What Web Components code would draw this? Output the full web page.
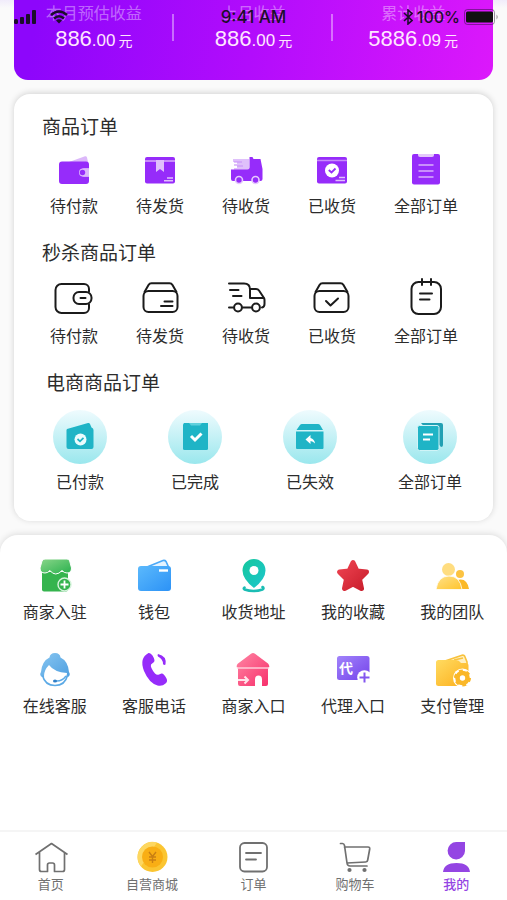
<!DOCTYPE html>
<html lang="zh-CN">
<head>
<meta charset="UTF-8">
<meta name="viewport" content="width=device-width, initial-scale=1.0">
<title>我的</title>
<style>
	html {
		height: 100%;
	}
	body {
		margin: 0;
		min-height: 100%;
		display: flex;
		flex-direction: column;
		position: relative;
		background: linear-gradient(#f1ecfb, #fafafa 8px);
		font-family: 'Liberation Sans', 'Noto Sans CJK SC', sans-serif;
		color: #2c2c2c;
	}
	tool-panel {
		flex: 1;
	}
</style>
</head>
<body>
	<status-bar></status-bar>
	<income-card>
		<income-item whole="886" cents=".00">本月预估收益</income-item>
		<income-item whole="886" cents=".00">上月收益</income-item>
		<income-item whole="5886" cents=".09">累计收益</income-item>
	</income-card>
	<order-panel>
		<order-group heading="商品订单">
			<icon-link icon="wallet">待付款</icon-link>
			<icon-link icon="parcel">待发货</icon-link>
			<icon-link icon="truck">待收货</icon-link>
			<icon-link icon="received">已收货</icon-link>
			<icon-link icon="list">全部订单</icon-link>
		</order-group>
		<order-group heading="秒杀商品订单">
			<icon-link icon="wallet-line" size="40">待付款</icon-link>
			<icon-link icon="parcel-line" size="40">待发货</icon-link>
			<icon-link icon="truck-line" size="40">待收货</icon-link>
			<icon-link icon="received-line" size="40">已收货</icon-link>
			<icon-link icon="note-line" size="40">全部订单</icon-link>
		</order-group>
		<order-group heading="电商商品订单" round>
			<icon-link icon="paid" size="54" round>已付款</icon-link>
			<icon-link icon="done" size="54" round>已完成</icon-link>
			<icon-link icon="expired" size="54" round>已失效</icon-link>
			<icon-link icon="files" size="54" round>全部订单</icon-link>
		</order-group>
	</order-panel>
	<tool-panel>
		<icon-link icon="shop">商家入驻</icon-link>
		<icon-link icon="purse">钱包</icon-link>
		<icon-link icon="pin">收货地址</icon-link>
		<icon-link icon="star">我的收藏</icon-link>
		<icon-link icon="team">我的团队</icon-link>
		<icon-link icon="service">在线客服</icon-link>
		<icon-link icon="phone">客服电话</icon-link>
		<icon-link icon="house">商家入口</icon-link>
		<icon-link icon="agent">代理入口</icon-link>
		<icon-link icon="payment">支付管理</icon-link>
	</tool-panel>
	<tab-bar>
		<tab-item icon="home">首页</tab-item>
		<tab-item icon="coin">自营商城</tab-item>
		<tab-item icon="order">订单</tab-item>
		<tab-item icon="cart">购物车</tab-item>
		<tab-item icon="me" active>我的</tab-item>
	</tab-bar>

<script>
// diagonal gradient for use inside an icon
const gradient = (id, from, to) => `
	<linearGradient id="${id}" x1="0" y1="0" x2="1" y2="1">
		<stop offset="0" stop-color="${from}"/><stop offset="1" stop-color="${to}"/>
	</linearGradient>`;

const ICONS = {
	// solid purple
	'wallet': `
		<path d="M13 10 29 4.200q1.500-.3 2 1.200L32 10z" fill="#dcb8fa"/>
		<path d="M6 9.500h24a3 3 0 0 1 3 3v4h-5a4 4 0 0 0 0 8h5V29a3 3 0 0 1-3 3H6a3 3 0 0 1-3-3V12.500a3 3 0 0 1 3-3z" fill="#962cfa"/>
		<path d="M33 16.500h-6a4 4 0 0 0 0 8h6z" fill="#dcb8fa"/>
		<circle cx="26.500" cy="20.500" r="2.700" fill="#962cfa"/>`,
	'parcel': `
		<rect x="3" y="5" width="30" height="26.500" rx="2" fill="#962cfa"/>
		<path d="M3 8h30v2H3z" fill="#c78bfb"/>
		<path d="M14 8h8v12l-4-3-4 3z" fill="#e0c0fb"/>
		<path d="M25 26h6M22 28.700h9" stroke="#e0c0fb" stroke-width="1.600"/>`,
	'truck': `
		<path d="M5 7h16v11H6v-2h3v-2H6v-2h3v-2H5z" fill="#dfc0fb"/>
		<path d="M6 10h8M9 14h6" stroke="#c68ff8"/>
		<path d="M21.500 5h3l1 2h7l2 10v10a2 2 0 0 1-2 2H5a2 2 0 0 1-2-2v-9.500h16.500q2 0 2-2z" fill="#962cfa"/>
		<g fill="#962cfa" stroke="#e6cafd" stroke-width="1.600"><circle cx="11" cy="28" r="3.500"/><circle cx="27.500" cy="28" r="3.500"/></g>`,
	'received': `
		<rect x="3" y="5" width="30" height="26.500" rx="2" fill="#962cfa"/>
		<path d="M3 8.500h30" stroke="#c78bfb" stroke-width="1.500"/>
		<circle cx="18" cy="18.500" r="7" fill="#fff"/>
		<path d="m14.800 18 2.700 2.500 4-4" fill="none" stroke="#962cfa" stroke-width="1.800"/>
		<path d="M25 25.500h6M21.500 28.500h9.500" stroke="#e0c0fb" stroke-width="1.600"/>`,
	'list': `
		<path d="M6 2h24q2 0 2 2v26.500q0 2-2 2H6q-2 0-2-2V4q0-2 2-2z" fill="#962cfa"/>
		<path d="M10 2h16v1a2 2 0 0 1-2 2H12a2 2 0 0 1-2-2z" fill="#e4c8fb"/>
		<path d="M10.500 13h15M10.500 19h15M10.500 25h15" stroke="#d9b0fb" stroke-width="1.600"/>`,

	// black outlines
	'wallet-line': `
		<g fill="none" stroke="#1b1b1b" stroke-width="2" stroke-linecap="round" stroke-linejoin="round">
			<path d="M35 13.500V11a5 5 0 0 0-5-5H7.500a6 6 0 0 0-6 6v17a6 6 0 0 0 6 6H30a5 5 0 0 0 5-5v-3.500"/>
			<rect x="19.500" y="14" width="18" height="12" rx="5.500"/><path d="M26.500 20h5"/>
		</g>`,
	'parcel-line': `
		<g fill="none" stroke="#1b1b1b" stroke-width="2" stroke-linecap="round" stroke-linejoin="round">
			<rect x="3.500" y="13" width="34" height="21" rx="5"/>
			<path d="m4.500 14 4-7q1-1.800 3-1.800h18q2 0 3 1.800l4 7"/>
			<path d="M24.500 23.500h8M21 28h11.500"/>
		</g>`,
	'truck-line': `
		<g fill="none" stroke="#1b1b1b" stroke-width="2" stroke-linecap="round" stroke-linejoin="round">
			<path d="M3 5.500h15q6 0 6 6V20h14M4 12h8.500M7 18h8.500M24 11h6q2 0 3 1.500l5 7.500q.5 1 .5 2v4q0 3-2.500 3.500"/>
			<path d="M3 29.500h4.500M16 29.500h9.500"/>
			<circle cx="12" cy="29.500" r="3.900"/><circle cx="30" cy="29.500" r="3.900"/>
		</g>`,
	'received-line': `
		<g fill="none" stroke="#1b1b1b" stroke-width="2" stroke-linecap="round" stroke-linejoin="round">
			<rect x="2.500" y="13" width="34" height="21" rx="5"/>
			<path d="m3.500 14 4-7q1-1.800 3-1.800h18q2 0 3 1.800l4 7"/>
			<path d="m14 23 4.500 4.500 7.500-7"/>
		</g>`,
	'note-line': `
		<g fill="none" stroke="#1b1b1b" stroke-width="2" stroke-linecap="round">
			<rect x="5.500" y="4" width="29.500" height="32" rx="7"/>
			<path d="M16 1v6M25 1v6M14 15.500h12M14 21.500h9.500"/>
		</g>`,

	// teal, drawn on a round plate
	'paid': `
		<path d="m14 19 21-6q1.500-.3 2 1l1.500 3.500q2 .5 2 2.500v17q0 2-2 2h-23q-2 0-2-2V20z" fill="#1fb4c6"/>
		<circle cx="27.500" cy="29.500" r="6" fill="#eafcfd"/>
		<path d="m24.500 29 2.500 2.300 3.500-3.500" fill="none" stroke="#1fb4c6" stroke-width="1.700"/>`,
	'done': `
		<path d="M16 13h24v25.500q0 1.500-1.500 1.500h-22q-1.500 0-1.500-1.500V14.500z" fill="#1fb4c6"/>
		<path d="M21 13h13l-2 2.500h-9z" fill="#5fd0dc"/>
		<path d="m23 26 4 4 6.500-6.500" fill="none" stroke="#fff" stroke-width="3"/>`,
	'expired': `
		<path d="m13.500 20 3.500-5q.7-1 2-1h16q1.300 0 2 1l3 5zM13 21.500h27.500V38q0 1-1 1H14q-1 0-1-1z" fill="#1fb4c6"/>
		<path d="m22.500 29.500 5-4.500v3q4 1 4.500 5.500-2-2.500-4.500-2.500v3z" fill="#fff"/>`,
	'files': `
		<path d="M18 13h20q2 0 2 2v20q0 2-2 2z" fill="#22a0b3"/>
		<rect x="14.500" y="15.500" width="21.500" height="25" rx="2" fill="#1fb4c6" stroke="#d0f4f7"/>
		<path d="M20 24.500h10M20 29.500h7" stroke="#fff" stroke-width="2"/>`,

	// colour icons of the tool grid
	'shop': `
		${gradient('g', '#8ad68a', '#28b04c')}
		<path d="M5 14h26v17.500q0 2-2 2H7q-2 0-2-2z" fill="#35b44e"/>
		<path d="M8 1h22q2 0 2.700 2L34.500 10q0 5-4.500 5-3 0-5-2.500Q22 16 18.700 16T13 12.500Q11 15 8 15q-5 0-5-5l2-7q1-2 3-2z" fill="url(#g)" stroke="#fff"/>
		<circle cx="27.500" cy="26.500" r="6.500" fill="#35b44e" stroke="#d6f3dc" stroke-width="1.400"/>
		<path d="M27.500 22.500v8M23.500 26.500h8" stroke="#fff" stroke-width="1.800"/>`,
	'purse': `
		${gradient('g', '#5bb9fc', '#2c92f6')}
		<path d="M11 9 27 2.500q2-.5 3 1L32.500 9z" fill="#e4f3ff" stroke="#4ba9f8" stroke-width="1.600"/>
		<rect x="2" y="8" width="33" height="25" rx="3" fill="url(#g)"/>
		<path d="M23 12.500h9" stroke="#fff" stroke-width="2.400"/>`,
	'pin': `
		${gradient('g', '#14c79c', '#1dc6ce')}
		<path d="M9.500 29.500q-1.500 1 0 2 9 3 18 0 2-1.500 0-2.500" fill="none" stroke="#1bbdb4" stroke-width="2.600" stroke-linecap="round"/>
		<path d="M19 1A11.500 11.500 0 0 1 30.500 12.500Q30.500 21 19 30 7.500 21 7.500 12.500A11.500 11.500 0 0 1 19 1z" fill="url(#g)"/>
		<circle cx="19" cy="12.500" r="4.500" fill="#fff"/>`,
	'star': `
		${gradient('g', '#ee4351', '#c91e2c')}
		<path d="m18 4.500 4 8.500 9.500 1-7 7 2 9.500L18 26l-8.500 4.500 2-9.500-7-7L14 13z" fill="url(#g)" stroke="url(#g)" stroke-width="5" stroke-linejoin="round"/>`,
	'team': `
		${gradient('g', '#ffe189', '#ffc42c')}
		<circle cx="26" cy="16" r="4" fill="#fcc341"/>
		<path d="M23 22q10-3 12 9h-9z" fill="#fbb928"/>
		<circle cx="14.500" cy="11.500" r="6.500" fill="#ffdd80"/>
		<path d="M2 31.500Q4 18 15 18t13 13.500z" fill="url(#g)" stroke="#fff" stroke-width=".8"/>`,
	'service': `
		${gradient('g', '#88c6f1', '#4e9fe0')}
		<path d="M18 1q5 0 5.500 4.500Q31 9 32 20q2 3-1 5H5q-3-2-1-5Q5 9 12.500 5.500 13 1 18 1z" fill="url(#g)"/>
		<path d="M7 24q0-6 5-11 5 7 18 8-1 12-12 12T7 24z" fill="#fff"/>
		<path d="M5.500 23.500Q8 33.500 18 33.500t12.500-10" fill="none" stroke="#5caae6" stroke-width="1.600"/>
		<path d="M29 24q-4 5.500-10 5" fill="none" stroke="#5caae6" stroke-width="1.400"/>
		<ellipse cx="18" cy="29" rx="2" ry="1.500" fill="#2f7fc8"/>`,
	'phone': `
		<path d="M12.500 1q2-.5 4 2.500 3 5 1.500 6.500l-3 2.500q-1 3 4 9 2 2 4 1l2.500-1q2-.5 5 5 1.500 3-1 5-3 3-8 2Q13 31 8 19 3 6 12.500 1z" fill="#962cfa"/>
		<path d="M22 2q9 2 7.500 10.500-1.500 1-2.500-.5Q27 7 22 4.500 21 3 22 2z" fill="#962cfa"/>`,
	'house': `
		${gradient('g', '#ff86a4', '#f72f6b')}
		<path d="M18 1q1 0 2 .8L33 11.500q2 2.500 1 4h-1V32q0 2-2 2h-4v-6.500q0-4-3.500-4T20 27.500V34H5q-2 0-2-2V15.500H2q-1-2 1-4L16 1.800Q17 1 18 1z" fill="url(#g)"/>
		<path d="M2 16h32" stroke="#ffd3df" stroke-width="1.400"/>
		<path d="M3 28h9M9.500 24.500 13 28l-3.500 3.500" fill="none" stroke="#ffe3ea" stroke-width="2"/>`,
	'agent': `
		${gradient('g', '#a183fb', '#7443ea')}
		<rect x="2" y="4" width="32.500" height="24" rx="2.500" fill="url(#g)"/>
		<text x="4" y="21" font-size="14" font-weight="700" font-family="Noto Sans CJK SC, sans-serif" fill="#fff">代</text>
		<circle cx="29.500" cy="25.500" r="7.300" fill="#fff"/>
		<path d="M29.500 20.500v10M24.500 25.500h10" stroke="#8356ef" stroke-width="2"/>`,
	'payment': `
		${gradient('g', '#ffdb61', '#fcae1a')}
		<path d="M11 9 28 3.200q2-.5 2.700 1L33 10v5H16z" fill="#fff0c2" stroke="#f8c23c" stroke-width="1.600"/>
		<path d="m20 8 9-2" stroke="#f8c23c" stroke-width="1.400"/>
		<path d="M4.500 8H22q3 0 5 3h5q2.500 0 2.500 2.500V32q0 2-2 2h-28q-2.500 0-2.500-2.500v-21Q2 8 4.500 8z" fill="url(#g)"/>
		<circle cx="28.500" cy="26" r="9.500" fill="#fff"/>
		<circle cx="28.500" cy="26" r="5" fill="none" stroke="#fab728" stroke-width="4.600"/>
		<circle cx="28.500" cy="26" r="7.500" fill="none" stroke="#fab728" stroke-width="2" stroke-dasharray="4 3.854"/>`,

	// tab bar
	'home': `
		<path d="m2.500 15.500 16-11 16 11M6.500 13v17.500q0 2 2 2h6V26q0-2 2-2h3q2 0 2 2v6.500h8q2 0 2-2V13" fill="none" stroke="#707070" stroke-width="1.700" stroke-linejoin="round"/>`,
	'coin': `
		<circle cx="18.500" cy="18" r="15" fill="#fbc531"/>
		<path d="M8 7.500a15 15 0 0 1 15-4L7 27.500A15 15 0 0 1 8 7.500z" fill="#fdd760"/>
		<circle cx="18.500" cy="18" r="10.500" fill="#f9ae14"/>
		<path d="m15 13 3.500 4.500L22 13M18.500 17.500V24M15 18h7M15 21h7" fill="none" stroke="#c97f13" stroke-width="1.400"/>`,
	'order': `
		<g fill="none" stroke="#707070" stroke-width="1.800" stroke-linecap="round">
			<rect x="5" y="4" width="27" height="28.500" rx="4.500"/>
			<path d="M11 14h15M11 20.500h10"/>
		</g>`,
	'cart': `
		<g fill="none" stroke="#707070" stroke-width="1.700" stroke-linecap="round" stroke-linejoin="round">
			<path d="M3.500 4.500h2q1.500 0 2 2L10 24q.4 3 3 3h17M7.500 8H31q2 0 1.700 2l-2 11q-.3 2-2 2L10 24"/>
		</g>
		<circle cx="12.500" cy="31" r="2.100" fill="#707070"/><circle cx="27.500" cy="31" r="2.100" fill="#707070"/>`,
	'me': `
		<path d="M18.500 3H27v9a8.700 8.700 0 1 1-8.500-9zM5 33q1-9 13.500-9T32 33z" fill="#9445e3"/>`,
};

class AppIcon extends HTMLElement {
	constructor() {
		super();
		this.attachShadow({ mode: 'open' });
	}

	connectedCallback() {
		const size = this.getAttribute('size') || 36;
		this.shadowRoot.innerHTML = `
			<style>
				:host { display: block; }
				svg { display: block; overflow: visible; }
			</style>
			<svg width="${size}" height="${size}" viewBox="0 0 ${size} ${size}" aria-hidden="true">${ICONS[this.getAttribute('name')]}</svg>
		`;
	}
}

class StatusBar extends HTMLElement {
	constructor() {
		super();
		this.attachShadow({ mode: 'open' });
		this.shadowRoot.innerHTML = `
			<style>
				:host {
					position: absolute;
					top: 0;
					left: 0;
					right: 0;
					z-index: 10;
					display: grid;
					grid-template-columns: 1fr auto 1fr;
					align-items: center;
					padding: 7px 8px 0;
					font: 500 16px/20px Inter, sans-serif;
					color: #1c0d2b;
				}
				.side {
					display: flex;
					align-items: center;
					gap: 4px;
				}
				.signal {
					gap: 13px;
					padding-left: 6px;
				}
				.time { font-size: 17px; }
				.power { justify-content: flex-end; }
				svg { display: block; }
			</style>
			<div class="side signal">
				<svg width="23" height="14" viewBox="0 0 23 14" fill="currentColor">
					<rect y="9" width="4" height="5" rx="1.500"/><rect x="6" y="7" width="4" height="7" rx="1"/>
					<rect x="12" y="4" width="4" height="10" rx="1"/><rect x="18" width="4" height="14" rx="1"/>
				</svg>
				<svg width="18" height="14" viewBox="0 0 18 14" fill="none" stroke="currentColor" stroke-width="2.600">
					<path d="M1 5q8-7 16 0M4 8.500q5-4.500 10 0"/><path d="m9 13.500-3-3q3-2.500 6 0z" fill="currentColor" stroke="none"/>
				</svg>
			</div>
			<div class="time">9:41 AM</div>
			<div class="side power">
				<svg width="10" height="16" viewBox="0 0 10 16" fill="none" stroke="currentColor" stroke-width="1.600">
					<path d="m1 4 8 7.500L5 15V1l4 3.500L1 12"/>
				</svg>
				<span>100%</span>
				<svg width="35" height="16" viewBox="0 0 35 16">
					<rect x=".5" y=".5" width="30" height="15" rx="3" fill="none" stroke="#1c0d2b" stroke-opacity=".45"/>
					<rect x="2" y="2.500" width="27" height="11" rx="1.500" fill="#111"/>
					<path d="M32.500 5.500q2.500 2.500 0 5z" fill="#999"/>
				</svg>
			</div>
		`;
	}
}

class IncomeCard extends HTMLElement {
	constructor() {
		super();
		this.attachShadow({ mode: 'open' });
		this.shadowRoot.innerHTML = `
			<style>
				:host {
					display: grid;
					grid-template-columns: repeat(3, 1fr);
					margin: 0 14px;
					padding: 3px 0 25px;
					border-radius: 0 0 14px 14px;
					background: linear-gradient(100deg, #8d06fb 5%, #b20cfc 50%, #dc18fb);
					color: #fff;
				}
				::slotted(:not(:last-child)) {
					background: linear-gradient(rgba(255, 255, 255, 0.4), rgba(255, 255, 255, 0.4)) right 11px / 2px 27px no-repeat;
				}
			</style>
			<slot></slot>
		`;
	}
}

class IncomeItem extends HTMLElement {
	constructor() {
		super();
		this.attachShadow({ mode: 'open' });
	}

	connectedCallback() {
		this.shadowRoot.innerHTML = `
			<style>
				:host {
					display: block;
					text-align: center;
				}
				.label {
					font-size: 16px;
					line-height: 22px;
					color: rgba(255, 255, 255, 0.4);
				}
				.amount {
					font-size: 22px;
					line-height: 28px;
					color: #ffe6ff;
				}
				.cents { font-size: 17px; }
				.unit {
					font-size: 14px;
					margin-left: 3px;
				}
			</style>
			<div class="label"><slot></slot></div>
			<div class="amount">${this.getAttribute('whole')}<span class="cents">${this.getAttribute('cents')}</span><span class="unit">元</span></div>
		`;
	}
}

class OrderPanel extends HTMLElement {
	constructor() {
		super();
		this.attachShadow({ mode: 'open' });
		this.shadowRoot.innerHTML = `
			<style>
				:host {
					display: flex;
					flex-direction: column;
					gap: 22px;
					margin: 14px 14px;
					padding: 20px 0 27px;
					border-radius: 16px;
					background: #fff;
					box-shadow: 0 -1px 6px rgba(0, 0, 0, 0.16);
				}
			</style>
			<slot></slot>
		`;
	}
}

class OrderGroup extends HTMLElement {
	constructor() {
		super();
		this.attachShadow({ mode: 'open' });
	}

	connectedCallback() {
		this.shadowRoot.innerHTML = `
			<style>
				:host { display: block; }
				h2 {
					margin: 0;
					padding: 0 28px;
					font-size: 19px;
					line-height: 28px;
					font-weight: 400;
				}
				nav {
					display: flex;
					justify-content: space-between;
					padding: 10px 35px 0 36px;
				}
				:host([round]) h2 { padding: 0 32px; }
				:host([round]) nav { padding: 12px 31px 0 39px; }
			</style>
			<h2>${this.getAttribute('heading')}</h2>
			<nav><slot></slot></nav>
		`;
	}
}

class IconLink extends HTMLElement {
	constructor() {
		super();
		this.attachShadow({ mode: 'open' });
	}

	connectedCallback() {
		this.shadowRoot.innerHTML = `
			<style>
				:host { display: block; }
				a {
					display: flex;
					flex-direction: column;
					align-items: center;
					gap: 8px;
					font-size: 16px;
					line-height: 22px;
					white-space: nowrap;
					color: inherit;
					text-decoration: none;
				}
				:host([round]) app-icon {
					border-radius: 50%;
					background: linear-gradient(#effbfe, #9ae7ed);
				}
			</style>
			<a href="#">
				<app-icon name="${this.getAttribute('icon')}" size="${this.getAttribute('size') || 36}"></app-icon>
				<span><slot></slot></span>
			</a>
		`;
	}
}

class ToolPanel extends HTMLElement {
	constructor() {
		super();
		this.attachShadow({ mode: 'open' });
		this.shadowRoot.innerHTML = `
			<style>
				:host {
					display: grid;
					grid-template-columns: repeat(5, 1fr);
					align-content: start;
					row-gap: 28px;
					padding: 23px 5px;
					border-radius: 18px 18px 0 0;
					background: #fff;
					box-shadow: 0 -1px 6px rgba(0, 0, 0, 0.12);
				}
			</style>
			<slot></slot>
		`;
	}
}

class TabBar extends HTMLElement {
	constructor() {
		super();
		this.attachShadow({ mode: 'open' });
		this.shadowRoot.innerHTML = `
			<style>
				:host {
					display: grid;
					grid-template-columns: repeat(5, 1fr);
					position: sticky;
					bottom: 0;
					padding: 7px 0 5px;
					border-top: 2px solid #f5f5f5;
					background: #fff;
				}
			</style>
			<slot></slot>
		`;
	}
}

class TabItem extends HTMLElement {
	constructor() {
		super();
		this.attachShadow({ mode: 'open' });
	}

	connectedCallback() {
		this.shadowRoot.innerHTML = `
			<style>
				:host { display: block; }
				a {
					display: flex;
					flex-direction: column;
					align-items: center;
					font-size: 13px;
					line-height: 20px;
					color: #707070;
					text-decoration: none;
				}
				:host([active]) a {
					color: #9445e3;
					font-weight: 500;
				}
			</style>
			<a href="#"><app-icon name="${this.getAttribute('icon')}"></app-icon><span><slot></slot></span></a>
		`;
	}
}

customElements.define('app-icon', AppIcon);
customElements.define('status-bar', StatusBar);
customElements.define('income-card', IncomeCard);
customElements.define('income-item', IncomeItem);
customElements.define('order-panel', OrderPanel);
customElements.define('order-group', OrderGroup);
customElements.define('icon-link', IconLink);
customElements.define('tool-panel', ToolPanel);
customElements.define('tab-bar', TabBar);
customElements.define('tab-item', TabItem);
</script>
</body>
</html>
